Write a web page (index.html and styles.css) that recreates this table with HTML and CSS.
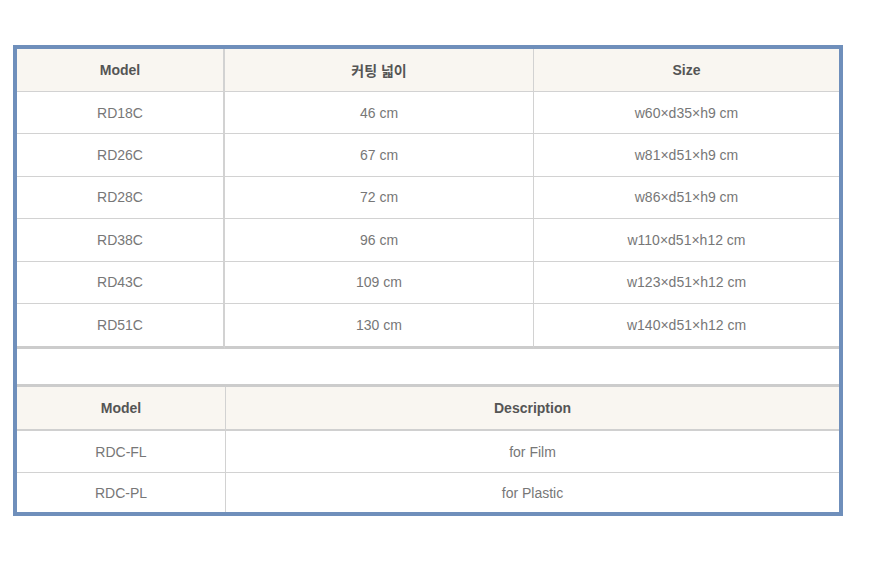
FILE: index.html
```html
<!DOCTYPE html>
<html lang="ko">
<head>
<meta charset="utf-8">
<title>Spec</title>
<link rel="stylesheet" href="styles.css">
</head>
<body>
<div class="frame">
  <table class="spec spec-main">
    <thead>
      <tr>
        <th class="c1">Model</th>
        <th class="c2">커팅 넓이</th>
        <th class="c3">Size</th>
      </tr>
    </thead>
    <tbody>
      <tr><td class="c1">RD18C</td><td class="c2">46 cm</td><td class="c3">w60×d35×h9 cm</td></tr>
      <tr><td class="c1">RD26C</td><td class="c2">67 cm</td><td class="c3">w81×d51×h9 cm</td></tr>
      <tr><td class="c1">RD28C</td><td class="c2">72 cm</td><td class="c3">w86×d51×h9 cm</td></tr>
      <tr><td class="c1">RD38C</td><td class="c2">96 cm</td><td class="c3">w110×d51×h12 cm</td></tr>
      <tr><td class="c1">RD43C</td><td class="c2">109 cm</td><td class="c3">w123×d51×h12 cm</td></tr>
      <tr class="last"><td class="c1">RD51C</td><td class="c2">130 cm</td><td class="c3">w140×d51×h12 cm</td></tr>
    </tbody>
  </table>
  <div class="spacer"></div>
  <table class="spec spec-acc">
    <thead>
      <tr>
        <th class="a1">Model</th>
        <th class="a2">Description</th>
      </tr>
    </thead>
    <tbody>
      <tr><td class="a1">RDC-FL</td><td class="a2">for Film</td></tr>
      <tr class="short"><td class="a1">RDC-PL</td><td class="a2">for Plastic</td></tr>
    </tbody>
  </table>
</div>
</body>
</html>
```

FILE: styles.css
```css
html, body {
  margin: 0;
  padding: 0;
  background: #ffffff;
}

body {
  font-family: "Liberation Sans", "Noto Sans CJK KR", sans-serif;
}

.frame {
  box-sizing: border-box;
  width: 830px;
  margin: 45px 0 0 13px;
  border: 4px solid #6f8fbb;
  background: #ffffff;
}

.spec {
  width: 100%;
  border-collapse: separate;
  border-spacing: 0;
  table-layout: fixed;
}

.spec th,
.spec td {
  box-sizing: border-box;
  padding: 0;
  text-align: center;
  vertical-align: middle;
}

.spec th {
  height: 43px;
  background: #f9f6f1;
  color: #555555;
  font-size: 14px;
  font-weight: bold;
  border-bottom: 1px solid #d2d2d2;
}

.spec td {
  height: 42.4px;
  color: #777777;
  font-size: 14px;
  font-weight: normal;
  border-bottom: 1px solid #d2d2d2;
}

.spec-main .c1 {
  width: 208px;
  border-right: 2px solid #d2d2d2;
}

.spec-main .c2 {
  width: 309px;
  border-right: 1px solid #d2d2d2;
}

.spec-main tr.last td {
  height: 45px;
  border-bottom: 3px solid #cccccc;
}

.spacer {
  height: 35px;
}

.spec-acc {
  border-top: 3px solid #cccccc;
}

.spec-acc th {
  height: 44px;
  border-bottom: 2px solid #d0d0d0;
}

.spec-acc .a1 {
  width: 209px;
  border-right: 1px solid #d2d2d2;
}

.spec-acc tr.short td {
  height: 39px;
  border-bottom: none;
}
```
